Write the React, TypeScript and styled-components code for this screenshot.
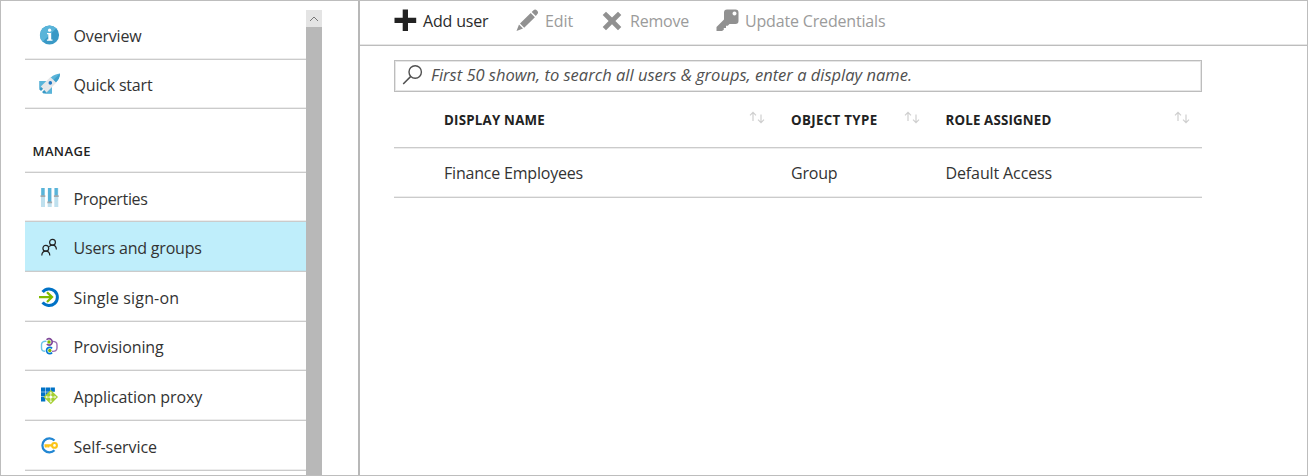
import React from "react";
import styled, { createGlobalStyle } from "styled-components";

const Global = createGlobalStyle`
  * { box-sizing: border-box; }
  body { margin: 0; background: #fff; font-family: "Open Sans", "Noto Sans", sans-serif; color: #333; }
`;

const Page = styled.div`
  display: flex;
  width: 1308px;
  height: 476px;
  overflow: hidden;
  border: 1px solid #bdbdbd;
`;

const Sidebar = styled.nav`
  width: 281px;
  margin: 9px 0 0 24px;
  flex: none;
  overflow: hidden;
`;

const Label = styled.span<{ $track?: number }>`
  letter-spacing: ${(p) => p.$track ?? 0}px;
  white-space: nowrap;
`;

const MenuItem = styled.a<{ $height: number; $active?: boolean; $top?: number }>`
  display: flex;
  align-items: center;
  height: ${(p) => p.$height}px;
  padding: ${(p) => p.$top ?? 3}px 0 0 14px;
  gap: 13.6px;
  font-size: 16px;
  line-height: 22px;
  color: #333;
  background: ${(p) => (p.$active ? "#bfeefb" : "transparent")};
  border-bottom: 1px solid #cbcbcb;
  box-shadow: inset 0 -1px 0 ${(p) => (p.$active ? "#bde3ee" : "#ededed")};
  svg { flex: none; margin-top: -2px; }
`;

const SectionTitle = styled.h2`
  display: flex;
  align-items: flex-end;
  height: 64px;
  margin: 0;
  padding: 0 0 12px 7.5px;
  font-size: 13px;
  font-weight: 600;
  color: #222;
  border-bottom: 1px solid #cbcbcb;
  box-shadow: inset 0 -1px 0 #ededed;
`;

const Scrollbar = styled.div`
  width: 16px;
  margin-top: 9px;
  flex: none;
  background: #b8b8b8;
`;

const ScrollButton = styled.div`
  display: flex;
  align-items: center;
  justify-content: center;
  height: 17px;
  background: #e4e4e4;
`;

const Main = styled.main`
  flex: 1;
  margin-left: 36px;
  border-left: 2px solid #b8b8b8;
`;

const Toolbar = styled.div`
  display: flex;
  height: 45px;
  padding: 0 0 5px 34px;
  border-bottom: 1px solid #bdbdbd;
  box-shadow: inset 0 -1px 0 #e6e6e6;
`;

const Command = styled.button<{ $width: number; $enabled?: boolean; $gap?: number }>`
  display: flex;
  align-items: center;
  width: ${(p) => p.$width}px;
  flex: none;
  gap: ${(p) => p.$gap ?? 6}px;
  padding: 0;
  border: 0;
  background: none;
  font: 16px "Open Sans", "Noto Sans", sans-serif;
  color: ${(p) => (p.$enabled ? "#2b2b2b" : "#9b9b9b")};
  svg { flex: none; }
`;

const Content = styled.section`
  width: 808px;
  margin: 14px 0 0 34px;
`;

const SearchBox = styled.div`
  display: flex;
  align-items: center;
  height: 32px;
  padding: 0 0 2px 7px;
  gap: 7px;
  border: 1px solid #bdbdbd;
  box-shadow: inset 0 0 0 1px #e6e6e6;
  font-size: 16.5px;
  line-height: 22px;
  font-style: italic;
  color: #505050;
`;

const GridRow = styled.div<{ $height: number; $header?: boolean }>`
  display: grid;
  grid-template-columns: 347px 154.5px 1fr;
  align-items: center;
  height: ${(p) => p.$height}px;
  padding-left: 50px;
  border-bottom: 1px solid #cbcbcb;
  box-shadow: ${(p) => (p.$header ? "0 1px 0 #ededed" : "inset 0 -1px 0 #ededed")};
  font-size: ${(p) => (p.$header ? 13.3 : 16)}px;
  font-weight: ${(p) => (p.$header ? 700 : 400)};
  color: ${(p) => (p.$header ? "#222" : "#333")};
`;

const Cell = styled.div<{ $end?: number }>`
  display: flex;
  align-items: center;
  justify-content: space-between;
  padding-right: ${(p) => p.$end ?? 0}px;
  svg { margin-top: -5px; }
`;

const Icon = ({ children, size = 21 }: { children: React.ReactNode; size?: number }) => (
  <svg width={size} height={size} viewBox={`0 0 ${size} ${size}`} fill="none">{children}</svg>
);

const InfoIcon = () => (
  <Icon>
    <circle cx="10.5" cy="10" r="9.6" fill="#3999c6" />
    <path d="M3.7 16.8A9.6 9.6 0 0 1 17.3 3.2Z" fill="#59b4d9" />
    <circle cx="10.6" cy="5.2" r="1.6" fill="#fff" />
    <path d="M8 8h4.2v6.6h1.3v1.2H7.9v-1.2h1.4V9.2H8z" fill="#fff" />
  </Icon>
);

const RocketIcon = () => (
  <Icon>
    <path d="M.5 8H13v12.5H4.500L.5 16.500z" fill="#3999c6" />
    <path d="M.5 8h8L.5 16z" fill="#59b4d9" />
    <path d="M13 13v7.500H6z" fill="#59b4d9" />
    <path d="M1.800 13.600 11.700 3.800l5.800 5.700-9.900 9.900z" fill="#e5e7e9" />
    <path d="M11.800 4.500C14.500 1.800 17.500.7 21 .4c-.2 3.500-1.300 6.200-4 8.900z" fill="#59b4d9" />
    <path d="M21 .4c-.2 3.500-1.300 6.200-4 8.900l-2.400-2.500z" fill="#3fa0cb" />
    <circle cx="11.300" cy="9.900" r="1.800" fill="#1f78c4" />
    <path d="m.8 20.200 4-4" stroke="#fff" strokeWidth="1.600" />
  </Icon>
);

const SlidersIcon = () => (
  <Icon>
    <path d="M2 1h4v19H2zM8.700 1h4v19h-4zM15.300 1h4v19h-4z" fill="#bfe0ee" />
    <path d="M2.300 1h3.200v8H2.300zM9 1h3.200v14H9zM15.600 1h3.200v8h-3.200z" fill="#59b4d9" />
    <path d="M1.500 8.300h4.800v1.700H1.500zM8.300 14.500h4.800v1.700H8.300zM14.900 8.300h4.800v1.700h-4.800z" fill="#a3a9ac" />
  </Icon>
);

const UsersIcon = () => (
  <Icon>
    <g stroke="#222" strokeWidth="1.200">
      <circle cx="13.500" cy="5.200" r="2.900" />
      <circle cx="6.800" cy="11.300" r="2.900" />
      <path d="M2.800 18.500c.1-2.700 1.600-4.300 4-4.300s3.900 1.600 4 4.300M10.200 9.700c.8-1 1.900-1.500 3.300-1.500 2.400 0 3.800 1.700 3.900 4.400" />
    </g>
  </Icon>
);

const SignOnIcon = () => (
  <Icon>
    <path d="M3.600 5A8.300 8.300 0 1 1 3.600 15.400" stroke="#0072c6" strokeWidth="3" />
    <path d="M0 10.100h12M8 5.200l5 4.900-5 4.900" stroke="#7fba00" strokeWidth="2.300" />
  </Icon>
);

const ProvisioningIcon = () => (
  <Icon>
    <path d="M7.500 6.400C4.300 5.800 2.500 7.600 2.500 9.600v3.300c0 2 1.500 3.300 3.700 3.300" stroke="#68c5ea" strokeWidth="1.400" />
    <path d="M13.500 6.400c3.200 0 4.500 1.400 4.500 3.400v3.300c0 2.200-1.700 3.500-5 3.200" stroke="#9b6fb5" strokeWidth="1.400" />
    <path d="M7.600 4.800a3.200 3.200 0 1 1 .2 4.400" stroke="#804998" strokeWidth="1.700" />
    <path d="M13.100 13.300a3.200 3.200 0 1 0 0 4.400" stroke="#0078d4" strokeWidth="1.700" />
    <circle cx="10" cy="7" r="1.700" fill="#7fba00" />
    <circle cx="10.800" cy="15.500" r="1.700" fill="#7fba00" />
  </Icon>
);

const ProxyIcon = () => (
  <Icon>
    <path d="M2 1.500h4.300v4.300H2zM6.800 1.500h4.300v4.300H6.800zM11.600 1.500h4.300v4.300h-4.300zM2 6.300h4.300v4.300H2zM6.800 6.300h4.300v4.300H6.800zM2 11.100h4.300v4.300H2z" fill="#0072c6" />
    <path d="m11.800 4 7.200 7.100-7.200 7.100-7.200-7.100z" fill="#a4cf30" />
    <path d="M11.800 7v8.200M7.700 11.100h8.200" stroke="#eef7d4" strokeWidth=".9" />
    <path d="m11.800 5.400 1.600 2.100h-3.200zM11.800 16.800l1.600-2.100h-3.200zM6.100 11.100l2.100-1.600v3.200zM17.500 11.100l-2.100-1.600v3.200z" fill="#eef7d4" />
    <circle cx="11.800" cy="11.100" r="1.300" fill="#fff" />
  </Icon>
);

const KeyCircleIcon = () => (
  <Icon>
    <path d="M15.500 4.600A7 7 0 1 0 15.500 14.200" stroke="#2387d3" strokeWidth="2.200" />
    <circle cx="15.500" cy="9.400" r="2.400" stroke="#fcc419" strokeWidth="2.100" />
    <path d="M13 9.400H5.500M6.800 9.400v2M9.300 9.400v2" stroke="#fcc419" strokeWidth="2.100" />
  </Icon>
);

const PlusIcon = () => (
  <Icon size={23}><path d="M8.700.5h5.300v8.200h8.200V14H14v8H8.700v-8H.5V8.700h8.200z" fill="#222" /></Icon>
);

const PencilIcon = () => (
  <Icon size={23}>
    <path d="M.5 22 3 15.500l4 4zM4 14.400 14.700 4l4.200 4.200L8.200 18.700zM15.700 3l1.800-1.700c1.200-1.100 2.300-.9 3.500.2 1.300 1.300 1.400 2.500.4 3.600L19.800 7z" fill="#919191" />
  </Icon>
);

const CrossIcon = () => (
  <Icon size={20}>
    <path d="M4 .8 10 6.600 16 .8l3.300 3.300-5.900 5.900 5.900 5.900-3.300 3.300-6-5.900-6 5.900L.7 15.900 6.600 10 .7 4.100z" fill="#919191" />
  </Icon>
);

const KeyIcon = () => (
  <Icon size={23}>
    <path fillRule="evenodd" d="M11 .5h8.500q3 0 3 3V12q0 3-3 3h-6l-1.700 1.700H10v2.200H7.800v1.800L6 22H.5v-4L8 10.500v-7q0-3 3-3zM18.500 2.500a2 2 0 1 0 .01 0z" fill="#919191" />
  </Icon>
);

const SearchIcon = () => (
  <Icon size={22}>
    <circle cx="13.200" cy="8" r="6.200" stroke="#505050" strokeWidth="1.400" />
    <path d="M8.800 12.400 1.200 20" stroke="#505050" strokeWidth="1.500" />
  </Icon>
);

const SortIcon = () => (
  <svg width="16" height="13" viewBox="0 0 16 13" fill="none" stroke="#cfcfcf" strokeWidth="1.200">
    <path d="M4 10V1.300M1 4.300l3-3 3 3M12 3.500v8M9 8.700l3 3 3-3" />
  </svg>
);

type Item = { text: string; icon: React.ReactNode; height: number; track: number; active?: boolean; top?: number };

const topItems: Item[] = [
  { text: "Overview", icon: <InfoIcon />, height: 50, track: -0.2 },
  { text: "Quick start", icon: <RocketIcon />, height: 49, track: -0.2, top: 1 },
];

const manageItems: Item[] = [
  { text: "Properties", icon: <SlidersIcon />, height: 49, track: -0.36 },
  { text: "Users and groups", icon: <UsersIcon />, height: 50, track: -0.2, active: true },
  { text: "Single sign-on", icon: <SignOnIcon />, height: 50, track: 0.17 },
  { text: "Provisioning", icon: <ProvisioningIcon />, height: 49, track: -0.12, top: 1 },
  { text: "Application proxy", icon: <ProxyIcon />, height: 50, track: -0.08 },
  { text: "Self-service", icon: <KeyCircleIcon />, height: 50, track: -0.07 },
];

const Menu = ({ items }: { items: Item[] }) => (
  <>
    {items.map((item) => (
      <MenuItem key={item.text} $height={item.height} $active={item.active} $top={item.top}>
        {item.icon}
        <Label $track={item.track}>{item.text}</Label>
      </MenuItem>
    ))}
  </>
);

export default function App() {
  return (
    <>
      <Global />
      <Page>
        <Sidebar>
          <Menu items={topItems} />
          <SectionTitle><Label $track={0.4}>MANAGE</Label></SectionTitle>
          <Menu items={manageItems} />
        </Sidebar>
        <Scrollbar>
          <ScrollButton>
            <svg width="10" height="6" viewBox="0 0 10 6" fill="none"><path d="m1 5 4-4 4 4" stroke="#777" /></svg>
          </ScrollButton>
        </Scrollbar>
        <Main>
          <Toolbar>
            <Command $width={122} $enabled><PlusIcon /><Label $track={-0.17}>Add user</Label></Command>
            <Command $width={86}><PencilIcon /><Label $track={-0.1}>Edit</Label></Command>
            <Command $width={114} $gap={8}><CrossIcon /><Label $track={-0.2}>Remove</Label></Command>
            <Command $width={175}><KeyIcon /><Label $track={-0.17}>Update Credentials</Label></Command>
          </Toolbar>
          <Content>
            <SearchBox>
              <SearchIcon />
              <Label>First 50 shown, to search all users &amp; groups, enter a display name.</Label>
            </SearchBox>
            <GridRow $height={56} $header>
              <Cell $end={26}><Label $track={0.22}>DISPLAY NAME</Label><SortIcon /></Cell>
              <Cell $end={26}><Label $track={0.33}>OBJECT TYPE</Label><SortIcon /></Cell>
              <Cell $end={12}><Label $track={0.17}>ROLE ASSIGNED</Label><SortIcon /></Cell>
            </GridRow>
            <GridRow $height={50}>
              <Cell><Label $track={-0.2}>Finance Employees</Label></Cell>
              <Cell><Label $track={-0.2}>Group</Label></Cell>
              <Cell><Label $track={-0.12}>Default Access</Label></Cell>
            </GridRow>
          </Content>
        </Main>
      </Page>
    </>
  );
}
